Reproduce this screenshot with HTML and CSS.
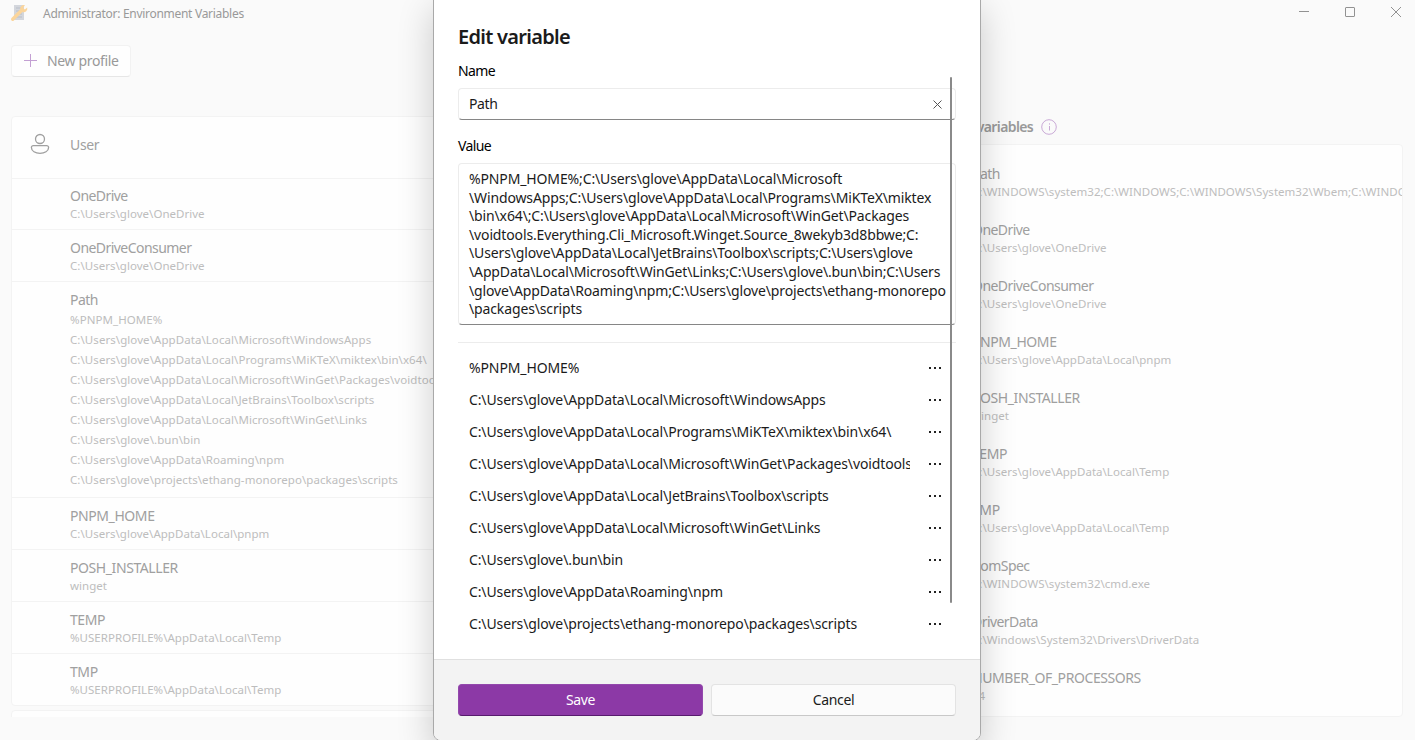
FILE: index.html
```html
<!DOCTYPE html>
<html lang="en">
<head>
<meta charset="utf-8">
<title>Environment Variables</title>
<link rel="stylesheet" href="styles.css">
</head>
<body>
<div class="window">
  <header class="titlebar">
    <svg class="app-icon" width="18" height="18" viewBox="0 0 18 18"><path d="M4 1h10v15H4z" fill="#d3d6dc"/><path d="M6 4h6M6 7h6M6 10h6M6 13h6" stroke="#b9bec8" stroke-width="1.200"/><path d="M2.700 15.300L12 6" stroke="#fbd59b" stroke-width="3.400" stroke-linecap="round"/><path d="M15 1.200a3.700 3.700 0 0 0-4.700 4.500l2.200 2.300a3.700 3.700 0 0 0 4.700-4.500l-2.400 2-1.700-1.700z" fill="#fbd59b"/></svg>
    <span class="app-title">Administrator: Environment Variables</span>
    <svg class="win-controls" width="104" height="12" viewBox="0 0 104 12" fill="none" stroke="#929292"><path d="M0 5.500h10M92 1l10 10M102 1l-10 10"/><rect x="46.500" y="1.500" width="9" height="9" rx=".5"/></svg>
  </header>
  <div class="toolbar"><button class="new-profile"><svg width="14" height="14" viewBox="0 0 14 14" stroke="#c3a0d3" fill="none"><path d="M7.500 0v13M1 6.500h13"/></svg><span>New profile</span></button></div>
  <main class="columns">
    <section class="profiles">
      <div class="card">
        <div class="card-head">
          <svg width="20" height="22" viewBox="0 0 20 22" fill="none" stroke="#a0a0a0" stroke-width="1.300"><circle cx="10" cy="6" r="4.500"/><path d="M3.300 12.600h13.400a1.900 1.900 0 0 1 1.900 1.900c0 3.700-4 5.800-8.600 5.800s-8.600-2.100-8.600-5.800a1.900 1.900 0 0 1 1.900-1.900z"/></svg>
          <span>User</span>
        </div>
        <div class="var first"><b>OneDrive</b><i>C:\Users\glove\OneDrive</i></div>
        <div class="var"><b>OneDriveConsumer</b><i>C:\Users\glove\OneDrive</i></div>
        <div class="var path"><b>Path</b><i>%PNPM_HOME%</i><i>C:\Users\glove\AppData\Local\Microsoft\WindowsApps</i><i>C:\Users\glove\AppData\Local\Programs\MiKTeX\miktex\bin\x64\</i><i>C:\Users\glove\AppData\Local\Microsoft\WinGet\Packages\voidtools.Everything.Cli</i><i>C:\Users\glove\AppData\Local\JetBrains\Toolbox\scripts</i><i>C:\Users\glove\AppData\Local\Microsoft\WinGet\Links</i><i>C:\Users\glove\.bun\bin</i><i>C:\Users\glove\AppData\Roaming\npm</i><i>C:\Users\glove\projects\ethang-monorepo\packages\scripts</i></div>
        <div class="var"><b class="caps">PNPM_HOME</b><i>C:\Users\glove\AppData\Local\pnpm</i></div>
        <div class="var"><b class="caps">POSH_INSTALLER</b><i>winget</i></div>
        <div class="var"><b class="caps">TEMP</b><i>%USERPROFILE%\AppData\Local\Temp</i></div>
        <div class="var"><b class="caps">TMP</b><i>%USERPROFILE%\AppData\Local\Temp</i></div>
      </div>
      <div class="card next"></div>
    </section>
    <section class="applied">
      <h2><span>Applied variables</span><svg width="16" height="16" viewBox="0 0 16 16" fill="none" stroke="#c9a9d6"><circle cx="8" cy="8" r="7.300"/><path d="M8.500 7v4.500M8.500 4.300v1.300"/></svg></h2>
      <div class="card applied-list">
        <div class="avar"><b>Path</b><i>C:\WINDOWS\system32;C:\WINDOWS;C:\WINDOWS\System32\Wbem;C:\WINDOWS\System32</i></div>
        <div class="avar"><b>OneDrive</b><i>C:\Users\glove\OneDrive</i></div>
        <div class="avar"><b>OneDriveConsumer</b><i>C:\Users\glove\OneDrive</i></div>
        <div class="avar"><b class="caps">PNPM_HOME</b><i>C:\Users\glove\AppData\Local\pnpm</i></div>
        <div class="avar"><b class="caps">POSH_INSTALLER</b><i>winget</i></div>
        <div class="avar"><b class="caps">TEMP</b><i>C:\Users\glove\AppData\Local\Temp</i></div>
        <div class="avar"><b class="caps">TMP</b><i>C:\Users\glove\AppData\Local\Temp</i></div>
        <div class="avar"><b>ComSpec</b><i>C:\WINDOWS\system32\cmd.exe</i></div>
        <div class="avar"><b>DriverData</b><i>C:\Windows\System32\Drivers\DriverData</i></div>
        <div class="avar"><b class="caps">NUMBER_OF_PROCESSORS</b><i>24</i></div>
      </div>
    </section>
  </main>
</div>
<div class="dialog" role="dialog">
  <div class="dialog-body">
    <h1>Edit variable</h1>
    <label>Name</label>
    <div class="field name"><span>Path</span><svg width="9" height="9" viewBox="0 0 9 9" stroke="#555"><path d="M.5.5l8 8M8.500.5l-8 8"/></svg></div>
    <label>Value</label>
    <div class="field value">
      <span>%PNPM_HOME%;C:\Users\glove\AppData\Local\Microsoft</span>
      <span>\WindowsApps;C:\Users\glove\AppData\Local\Programs\MiKTeX\miktex</span>
      <span>\bin\x64\;C:\Users\glove\AppData\Local\Microsoft\WinGet\Packages</span>
      <span>\voidtools.Everything.Cli_Microsoft.Winget.Source_8wekyb3d8bbwe;C:</span>
      <span>\Users\glove\AppData\Local\JetBrains\Toolbox\scripts;C:\Users\glove</span>
      <span>\AppData\Local\Microsoft\WinGet\Links;C:\Users\glove\.bun\bin;C:\Users</span>
      <span>\glove\AppData\Roaming\npm;C:\Users\glove\projects\ethang-monorepo</span>
      <span>\packages\scripts</span>
    </div>
    <ul class="entries">
      <li><span>%PNPM_HOME%</span><em></em></li>
      <li><span>C:\Users\glove\AppData\Local\Microsoft\WindowsApps</span><em></em></li>
      <li><span>C:\Users\glove\AppData\Local\Programs\MiKTeX\miktex\bin\x64\</span><em></em></li>
      <li><span>C:\Users\glove\AppData\Local\Microsoft\WinGet\Packages\voidtools</span><em></em></li>
      <li><span>C:\Users\glove\AppData\Local\JetBrains\Toolbox\scripts</span><em></em></li>
      <li><span>C:\Users\glove\AppData\Local\Microsoft\WinGet\Links</span><em></em></li>
      <li><span>C:\Users\glove\.bun\bin</span><em></em></li>
      <li><span>C:\Users\glove\AppData\Roaming\npm</span><em></em></li>
      <li><span>C:\Users\glove\projects\ethang-monorepo\packages\scripts</span><em></em></li>
    </ul>
    <div class="scrollbar"></div>
  </div>
  <footer class="dialog-foot"><button class="save">Save</button><button class="cancel">Cancel</button></footer>
</div>
</body>
</html>
```
FILE: styles.css
```css
* { box-sizing: border-box; margin: 0; padding: 0; }
body { width: 1415px; height: 740px; overflow: hidden; position: relative; background: #fafafa; font: 14px/20px "Noto Sans", "Open Sans", sans-serif; color: #1b1b1b; letter-spacing: -0.350px; }
button { font: inherit; letter-spacing: inherit; }
b, i { display: block; font-style: normal; font-weight: 400; white-space: nowrap; }
b { letter-spacing: -0.550px; }
b.caps { letter-spacing: -0.420px; }
.window { height: 740px; display: flex; flex-direction: column; color: #a0a0a0; }
.titlebar { height: 45px; display: flex; align-items: flex-start; padding-left: 10px; }
.app-icon { margin-top: 4px; }
.app-title { margin: 4px 0 0 15px; font-size: 12px; color: #999; letter-spacing: -0.290px; }
.win-controls { margin: 6px 12px 0 auto; }
.new-profile { margin-left: 11px; width: 120px; height: 32px; border: 1px solid #f2f2f2; border-bottom-color: #e6e6e6; border-radius: 4px; background: #fefefe; color: #999; display: flex; align-items: center; padding-left: 11px; gap: 10px; }
.columns { margin-top: 39px; height: 601px; display: grid; grid-template-columns: 931px 1fr; overflow: hidden; }
.profiles { padding-left: 11px; }
.card { background: #fefefe; border: 1px solid #f3f3f3; border-radius: 4px; overflow: hidden; }
.card-head { height: 61px; display: flex; align-items: center; padding: 0 0 8px 18px; gap: 20px; }
.card-head span { padding-top: 2px; }
.var { border-top: 1px solid #f3f3f3; height: 52px; padding: 8px 0 0 58px; }
.var.first { height: 51px; padding-top: 7px; }
.var i, .avar i { font-size: 11.500px; line-height: 16px; color: #bdbdbd; letter-spacing: 0.030px; }
.var.path { height: 216px; padding-top: 8px; }
.var.path i { line-height: 20px; letter-spacing: 0.070px; }
.next { height: 20px; margin-top: 4px; }
.applied { padding-right: 12px; margin-left: 12px; min-width: 0; }
.applied h2 { height: 28px; padding: 0 0 6px 0; display: flex; align-items: center; gap: 8px; font-size: 14px; font-weight: 600; color: #999; margin-left: -17px; letter-spacing: -0.600px; }
.applied-list { height: 573px; padding: 19px 0 0 28px; }
.avar { height: 56px; }
.dialog { position: absolute; left: 433px; top: -8px; width: 548px; height: 749px; border: 1px solid #a9a9a9; border-radius: 8px; background: #fff; box-shadow: 0 16px 36px rgba(0,0,0,.2); overflow: hidden; display: flex; flex-direction: column; }
.dialog-body { height: 667px; padding: 30px 24px 0; position: relative; }
h1 { font-size: 20px; line-height: 28px; font-weight: 600; letter-spacing: -0.720px; margin-bottom: 10px; }
label { display: block; color: #000; margin-bottom: 7px; letter-spacing: -0.600px; }
.field { border: 1px solid #ececec; border-bottom-color: #868686; border-radius: 4px; padding-left: 10px; width: 498px; background: #fff; }
.name { height: 32px; display: flex; align-items: center; justify-content: space-between; padding-right: 13px; margin-bottom: 16px; }
.value { height: 162px; padding-top: 6px; letter-spacing: -0.135px; }
.value span { display: block; line-height: 18.600px; white-space: nowrap; }
.entries { list-style: none; margin-top: 17px; border-top: 1px solid #ececec; padding-top: 9px; width: 498px; letter-spacing: -0.115px; }
.entries li { height: 32px; display: flex; align-items: center; padding: 0 11px; justify-content: space-between; }
.entries span { width: 441px; overflow: hidden; white-space: nowrap; }
.entries em { width: 2px; height: 2px; background: #222; margin-right: 9px; box-shadow: -5px 0 #222, 5px 0 #222; }
.scrollbar { position: absolute; left: 516px; top: 84px; width: 2px; height: 526px; background: #8a8a8a; border-radius: 1px; }
.dialog-foot { flex: 1; background: #f3f3f3; border-top: 1px solid #e0e0e0; padding: 24px; display: flex; gap: 8px; }
.dialog-foot button { flex: 1; height: 32px; border-radius: 4px; border: 1px solid #e3e3e3; border-bottom-color: #c8c8c8; background: #fbfbfb; color: #1b1b1b; }
.dialog-foot .save { background: #8c39a6; border-color: #9348ac; border-bottom-color: #571b6d; color: #fff; }
```
